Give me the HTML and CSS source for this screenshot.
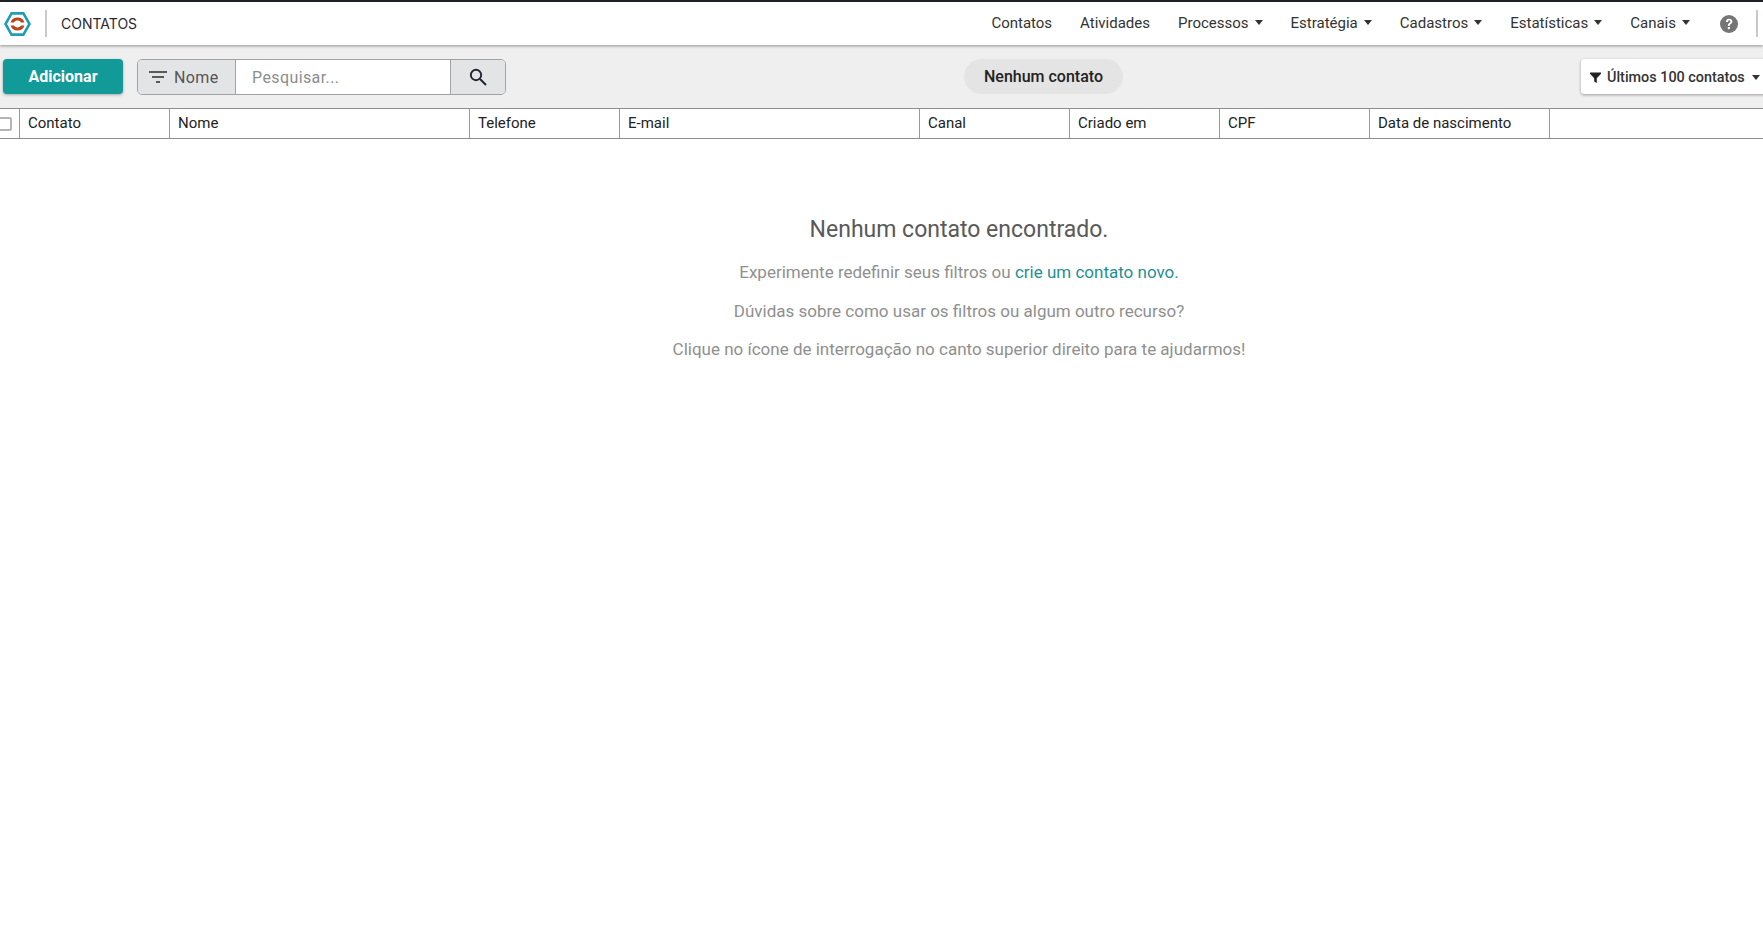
FILE: index.html
```html
<!DOCTYPE html>
<html lang="pt-BR">
<head>
<meta charset="utf-8">
<title>Contatos</title>
<link rel="stylesheet" href="styles.css">
</head>
<body>
<header class="navbar">
  <svg class="logo" viewBox="0 0 27 24" aria-hidden="true">
    <path d="M7.6 1.4H19.4L25.5 12L19.4 22.6H7.6L1.5 12Z" fill="none" stroke="#1f9db5" stroke-width="2.6"/>
    <path d="M6.6 10.4C7.4 7.2 10 5.4 13.5 5.4C17 5.4 19.6 7.2 20.4 10.4H17C16.2 9.2 15 8.6 13.5 8.6C12 8.6 10.8 9.2 10 10.4Z" fill="#b9451f"/>
    <path d="M6.6 13.6H10C10.8 14.8 12 15.4 13.5 15.4C15 15.4 16.2 14.8 17 13.6H20.4C19.6 16.8 17 18.6 13.5 18.6C10 18.6 7.4 16.8 6.6 13.6Z" fill="#b9451f"/>
  </svg>
  <span class="nav-sep"></span>
  <span class="app-title">CONTATOS</span>
  <nav class="menu">
    <a class="menu-item">Contatos</a>
    <a class="menu-item">Atividades</a>
    <a class="menu-item caret">Processos</a>
    <a class="menu-item caret">Estratégia</a>
    <a class="menu-item caret">Cadastros</a>
    <a class="menu-item caret">Estatísticas</a>
    <a class="menu-item caret">Canais</a>
  </nav>
  <svg class="help" viewBox="0 0 18 18" aria-hidden="true">
    <circle cx="9" cy="9" r="9" fill="#757575"/>
    <path d="M5.9 6.9C6 4.9 7.3 3.7 9.2 3.7C11 3.7 12.4 4.8 12.4 6.5C12.4 7.7 11.8 8.4 10.8 9C10 9.5 9.8 9.8 9.8 10.6V11H7.9V10.4C7.9 9.2 8.3 8.6 9.3 8C10.1 7.5 10.4 7.2 10.4 6.6C10.4 5.9 9.9 5.4 9.1 5.4C8.3 5.4 7.8 6 7.7 6.9Z" fill="#fff"/>
    <rect x="7.8" y="12" width="2.1" height="2.1" fill="#fff"/>
  </svg>
  <span class="nav-end"></span>
</header>

<section class="toolbar">
  <button class="btn-add">Adicionar</button>
  <div class="search">
    <div class="search-field">
      <svg class="filter-lines" viewBox="0 0 18 12" aria-hidden="true">
        <path d="M0 1H18M3 6H15M7 11H11" stroke="#2b2b2b" stroke-width="1.6" fill="none"/>
      </svg>
      <span>Nome</span>
    </div>
    <div class="search-input">Pesquisar...</div>
    <div class="search-btn">
      <svg class="search-icon" viewBox="0 0 18 18" aria-hidden="true">
        <circle cx="7" cy="7" r="5.2" fill="none" stroke="#1f2430" stroke-width="1.9"/>
        <path d="M11 11L17 17" stroke="#1f2430" stroke-width="2"/>
      </svg>
    </div>
  </div>
  <div class="pill">Nenhum contato</div>
  <div class="period">
    <svg class="funnel" viewBox="0 0 12 12" aria-hidden="true"><path d="M0 0.5H12V2L7.4 6.8V12L4.6 10.4V6.8L0 2Z" fill="#222"/></svg>
    <span>Últimos 100 contatos</span>
    <span class="period-caret"></span>
  </div>
</section>

<div class="thead">
  <div class="th th-check"><span class="checkbox"></span></div>
  <div class="th w150">Contato</div>
  <div class="th w300">Nome</div>
  <div class="th w150">Telefone</div>
  <div class="th w300">E-mail</div>
  <div class="th w150">Canal</div>
  <div class="th w150">Criado em</div>
  <div class="th w150">CPF</div>
  <div class="th w180">Data de nascimento</div>
  <div class="th th-rest"></div>
</div>

<main class="empty">
  <h2 class="empty-title">Nenhum contato encontrado.</h2>
  <p class="empty-line">Experimente redefinir seus filtros ou <a class="link">crie um contato novo.</a></p>
  <p class="empty-line">Dúvidas sobre como usar os filtros ou algum outro recurso?</p>
  <p class="empty-line">Clique no ícone de interrogação no canto superior direito para te ajudarmos!</p>
</main>
</body>
</html>
```
FILE: styles.css
```css
* { box-sizing: border-box; }
html, body { margin: 0; height: 100%; overflow: hidden; background: #fff; }
body { font-family: Roboto, "Liberation Sans", sans-serif; color: #212529; }

.navbar {
  position: relative;
  z-index: 2;
  display: flex;
  align-items: center;
  height: 45px;
  background: #fff;
  border-top: 2px solid #1e2125;
  box-shadow: 0 1px 3px rgba(0, 0, 0, .4);
}
.logo { width: 27px; height: 24px; margin-left: 4px; flex: none; }
.nav-sep { width: 2px; height: 27px; margin-left: 14px; background: #c9c9c9; flex: none; }
.app-title { margin: 0 0 0 14px; font: 400 14px Inter, sans-serif; color: #2b2733; }
.menu { display: flex; margin: 0 0 2px auto; gap: 28px; font-size: 15px; color: #333; }
.menu-item { display: flex; align-items: center; white-space: nowrap; }
.caret::after {
  content: "";
  margin-left: 6px;
  border-left: 4.5px solid transparent;
  border-right: 4.5px solid transparent;
  border-top: 5px solid #333;
}
.help { width: 18px; height: 18px; margin-left: 30px; flex: none; }
.nav-end { width: 2px; height: 27px; margin: 0 5px 0 18px; background: #c9c9c9; flex: none; }

.toolbar {
  display: flex;
  align-items: flex-start;
  height: 63px;
  padding: 14px 0 0 3px;
  background: #efefef;
}
.btn-add {
  flex: none;
  width: 120px;
  height: 35px;
  border: 0;
  border-radius: 4px;
  background: #129a98;
  color: #fff;
  font: 700 16px Roboto, sans-serif;
  box-shadow: 0 1px 3px rgba(0, 0, 0, .3);
}
.search {
  display: flex;
  flex: none;
  width: 369px;
  height: 36px;
  margin-left: 14px;
  border: 1px solid #a3a1a3;
  border-radius: 5px;
  overflow: hidden;
  font-size: 16px;
  letter-spacing: .4px;
}
.search-field {
  display: flex;
  align-items: center;
  flex: none;
  gap: 7px;
  width: 98px;
  padding-left: 11px;
  background: #e3e4e6;
  border-right: 1px solid #a3a1a3;
  color: #555;
}
.filter-lines { width: 18px; height: 12px; }
.search-input {
  display: flex;
  align-items: center;
  flex: none;
  width: 214px;
  padding-left: 16px;
  background: #fff;
  color: #8d8d8d;
}
.search-btn {
  display: flex;
  align-items: center;
  justify-content: center;
  flex: 1;
  background: #e3e4e6;
  border-left: 1px solid #a3a1a3;
}
.search-icon { width: 18px; height: 18px; }
.pill {
  display: flex;
  align-items: center;
  justify-content: center;
  flex: none;
  width: 159px;
  height: 35px;
  margin-left: 458px;
  border-radius: 18px;
  background: #e4e4e4;
  font-size: 16px;
  font-weight: 500;
  color: #222;
}
.period {
  display: flex;
  align-items: center;
  flex: none;
  width: 190px;
  height: 35px;
  margin-left: 458px;
  padding: 1px 0 0 9px;
  border-radius: 3px;
  background: #fff;
  box-shadow: 0 1px 3px rgba(0, 0, 0, .35);
  font-size: 14.4px;
  font-weight: 500;
  color: #333;
}
.funnel { width: 11px; height: 11px; margin-right: 6px; }
.period-caret {
  margin-left: 7px;
  border-left: 4.5px solid transparent;
  border-right: 4.5px solid transparent;
  border-top: 5px solid #333;
}

.thead {
  display: flex;
  height: 31px;
  border-top: 1px solid #8f8f8f;
  border-bottom: 1px solid #8f8f8f;
  background: #fff;
  font-size: 15px;
  color: #222;
}
.th {
  display: flex;
  align-items: center;
  flex: none;
  padding: 0 0 2px 8px;
  border-right: 1px solid #9a9a9a;
}
.th-check { width: 20px; padding: 0; }
.th-rest { flex: 1; border-right: 0; }
.w150 { width: 150px; }
.w180 { width: 180px; }
.w300 { width: 300px; }
.checkbox {
  width: 14px;
  height: 14px;
  margin-left: -2px;
  border: 2px solid #b5b5b5;
  border-radius: 2px;
  background: #fff;
}

.empty { width: 1918px; padding-top: 73px; text-align: center; }
.empty-title { margin: 0 0 13px; font-size: 23px; line-height: 36px; font-weight: 400; color: #595959; }
.empty-line { margin: 0 0 16px; font-size: 17px; line-height: 22.5px; color: #8f8f8f; }
.link { color: #1f8f92; }
```
